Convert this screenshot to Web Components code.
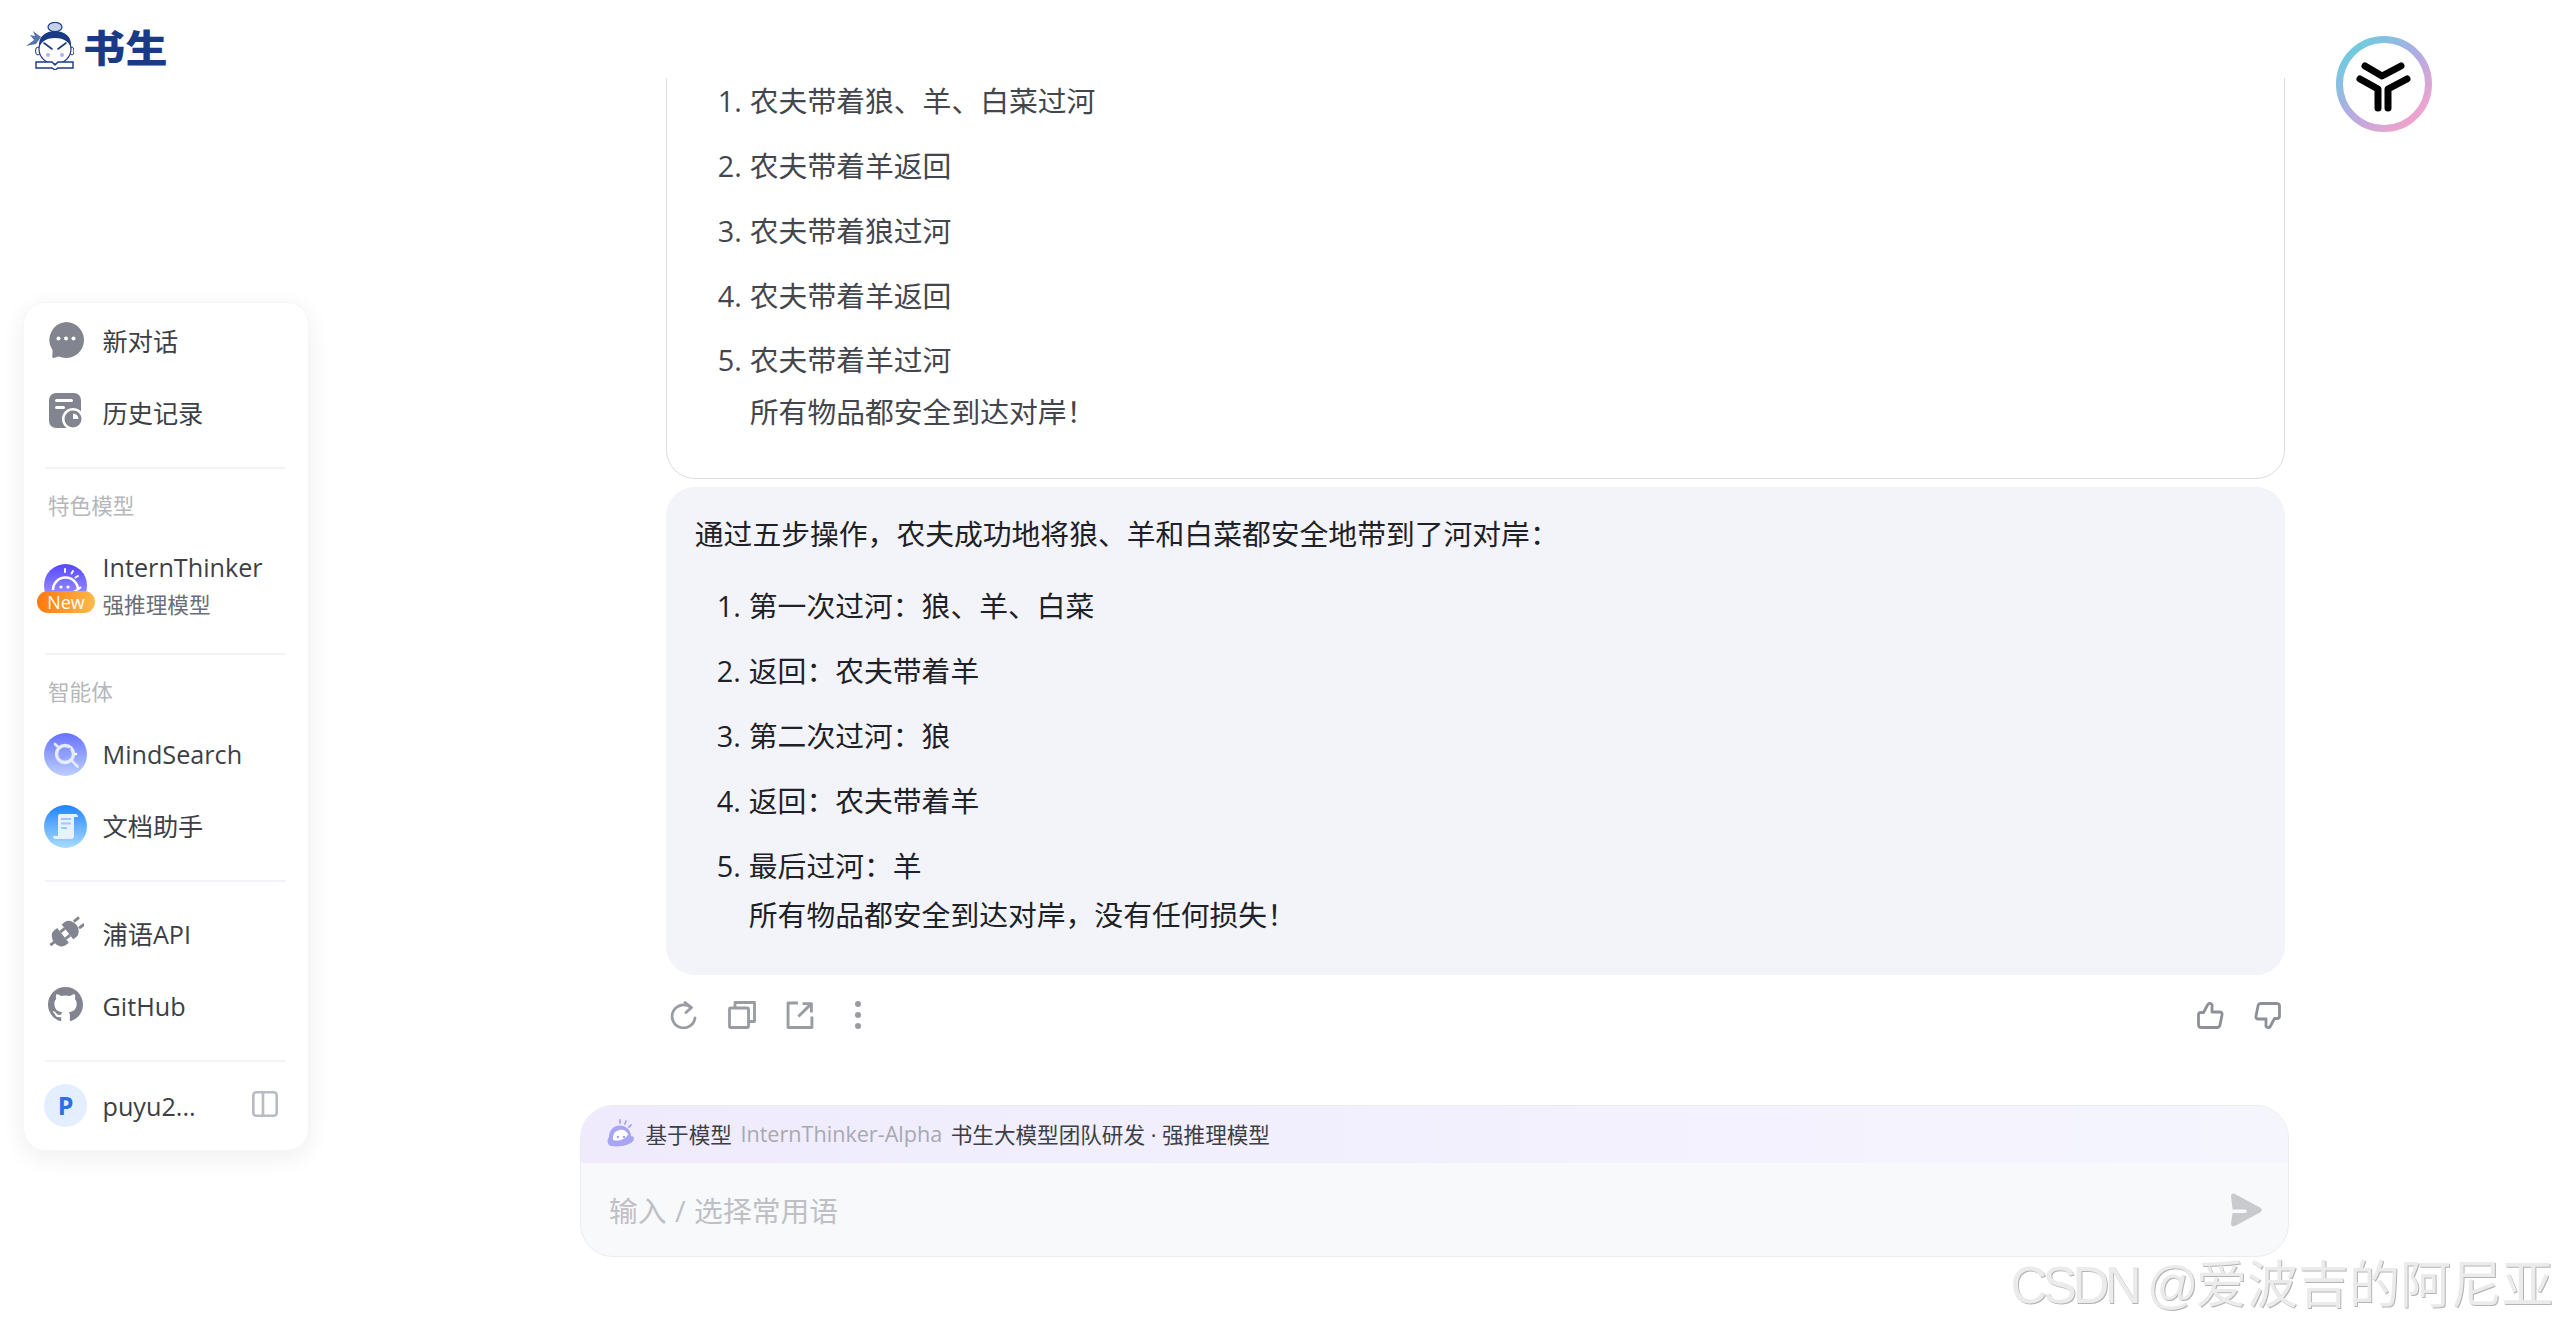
<!DOCTYPE html>
<html lang="zh-CN"><head><meta charset="utf-8"><title>书生</title>
<style>
html,body{margin:0;height:100%;overflow:hidden;background:#fff}
body{font-family:"Open Sans","Noto Sans CJK SC",sans-serif;color:#3c3f46}
svg{display:block}
</style></head>
<body>
<app-shell>
  <brand-logo slot="left"></brand-logo>
  <side-nav slot="left">
    <nav-item label="新对话">
      <svg slot="icon" width="36" height="36" viewBox="0 0 36 36" style="margin-top:-4px"><path fill="#82858f" d="M18 0a18 18 0 1 1-7.2 34.5l-5.3 1.4a1.2 1.2 0 0 1-1.2-1.2l.3-6.5A18 18 0 0 1 18 0z"/><circle cx="10.500" cy="16.500" r="2" fill="#fff"/><circle cx="18" cy="16.500" r="2" fill="#fff"/><circle cx="25.500" cy="16.500" r="2" fill="#fff"/></svg>
    </nav-item>
    <nav-item label="历史记录">
      <svg slot="icon" width="36" height="37" viewBox="0 0 36 37" style="margin-top:-4px"><rect x="1" y="0" width="32" height="35" rx="7" fill="#82858f"/><rect x="7" y="6" width="18" height="3" rx="1.500" fill="#fff"/><rect x="7" y="13" width="10" height="3" rx="1.500" fill="#fff"/><circle cx="25" cy="26" r="11" fill="#fff"/><circle cx="25" cy="26" r="8.500" fill="#82858f"/><path d="M25 20.500V26h5.500A5.500 5.500 0 0 0 25 20.500z" fill="#fff"/></svg>
    </nav-item>
    <nav-divider></nav-divider>
    <nav-label>特色模型</nav-label>
    <nav-item label="InternThinker" sub="强推理模型" tall>
      <svg slot="icon" width="43" height="43" viewBox="0 0 43 43"><defs><linearGradient id="g1" x1="0" y1="0" x2="0" y2="1"><stop offset="0" stop-color="#5647ff"/><stop offset="1" stop-color="#ada9ff"/></linearGradient></defs><circle cx="21.500" cy="21.500" r="21.500" fill="url(#g1)"/><path d="M9 26a12.500 12.500 0 0 1 25 0" fill="none" stroke="#fff" stroke-width="2.600"/><path d="M6 31c8 2 22 0 31-8" fill="none" stroke="#fff" stroke-width="2"/><circle cx="17" cy="23" r="1.600" fill="#fff"/><circle cx="24" cy="23" r="1.600" fill="#fff"/><path d="M21 5v3M29 7l-1.500 2.500M34 12l-2.500 1.500" stroke="#fff" stroke-width="2" stroke-linecap="round"/></svg>
      <new-badge slot="badge">New</new-badge>
    </nav-item>
    <nav-divider></nav-divider>
    <nav-label>智能体</nav-label>
    <nav-item label="MindSearch">
      <svg slot="icon" width="43" height="43" viewBox="0 0 43 43"><defs><linearGradient id="g2" x1="0" y1="0" x2="0" y2="1"><stop offset="0" stop-color="#6671ff"/><stop offset="1" stop-color="#bcd0ff"/></linearGradient></defs><circle cx="21.500" cy="21.500" r="21.500" fill="url(#g2)"/><circle cx="21" cy="21" r="8.500" fill="none" stroke="#e6ecff" stroke-width="3.400"/><path d="M27.500 27.500l6 6M11 11l3 3" stroke="#e6ecff" stroke-width="2.600" stroke-linecap="round"/><path d="M26 15l-4 7-5 3" fill="none" stroke="#8f9bff" stroke-width="2"/><circle cx="32" cy="21" r="1.300" fill="#fff"/></svg>
    </nav-item>
    <nav-item label="文档助手">
      <svg slot="icon" width="43" height="43" viewBox="0 0 43 43"><defs><linearGradient id="g3" x1="0" y1="0" x2="0" y2="1"><stop offset="0" stop-color="#1f84ff"/><stop offset="1" stop-color="#a8dcff"/></linearGradient></defs><circle cx="21.500" cy="21.500" r="21.500" fill="url(#g3)"/><path d="M14 11q0-2 2-2h16q2 .5 2 3h-4v19q0 3-3 3H11q-2-.5-2-3h5z" fill="#e8f2ff"/><path d="M17 14h10M17 18.500h10M17 23h6" stroke="#9cc8ff" stroke-width="2"/></svg>
    </nav-item>
    <nav-divider></nav-divider>
    <nav-item label="浦语API" gap>
      <svg slot="icon" width="36" height="34" viewBox="0 0 36 36" style="margin-top:-4px"><g transform="rotate(-38 18 18)" fill="#82858f"><rect x="-3" y="16.500" width="9" height="3"/><path d="M14 8H10a8 10 0 0 0 0 20h4z"/><rect x="14" y="12" width="6" height="3"/><rect x="14" y="21" width="6" height="3"/><path d="M20 8h4a8 10 0 0 1 0 20h-4z"/><rect x="32" y="12" width="7" height="3"/><rect x="32" y="21" width="7" height="3"/></g></svg>
    </nav-item>
    <nav-item label="GitHub">
      <svg slot="icon" width="35" height="35" viewBox="0 0 16 16" style="margin-top:-4px"><path fill="#82858f" d="M8 0C3.58 0 0 3.58 0 8c0 3.54 2.29 6.53 5.47 7.59.4.07.55-.17.55-.38 0-.19-.01-.82-.01-1.49-2.01.37-2.53-.49-2.69-.94-.09-.23-.48-.94-.82-1.130-.28-.15-.68-.52-.01-.53.63-.01 1.080.58 1.230.82.72 1.210 1.870.87 2.330.66.07-.52.28-.87.51-1.070-1.780-.2-3.640-.89-3.640-3.950 0-.87.31-1.590.82-2.150-.08-.2-.36-1.020.08-2.120 0 0 .67-.21 2.200.82.64-.18 1.320-.27 2-.27.68 0 1.360.09 2 .27 1.530-1.040 2.200-.82 2.200-.82.44 1.100.16 1.920.08 2.120.51.56.82 1.270.82 2.150 0 3.070-1.870 3.750-3.650 3.950.29.25.54.73.54 1.480 0 1.070-.01 1.930-.01 2.200 0 .21.15.46.55.38A8.013 8.013 0 0 0 16 8c0-4.420-3.580-8-8-8z"/></svg>
    </nav-item>
    <nav-divider></nav-divider>
    <nav-item label="puyu2..." foot>
      <user-avatar slot="icon">P</user-avatar>
      <svg slot="end" width="26" height="26" viewBox="0 0 26 26" style="margin-top:-6px"><rect x="1.300" y="1.300" width="23.400" height="23.400" rx="3" fill="none" stroke="#b9bbc3" stroke-width="2.600"/><path d="M11 2v22" stroke="#b9bbc3" stroke-width="2.600"/></svg>
    </nav-item>
  </side-nav>

  <chat-pane slot="center">
    <chat-bubble variant="answer">
      <step-item num="1">农夫带着狼、羊、白菜过河</step-item>
      <step-item num="2">农夫带着羊返回</step-item>
      <step-item num="3">农夫带着狼过河</step-item>
      <step-item num="4">农夫带着羊返回</step-item>
      <step-item num="5">农夫带着羊过河<span slot="note">所有物品都安全到达对岸！</span></step-item>
    </chat-bubble>
    <chat-bubble variant="summary">
      <bubble-lead>通过五步操作，农夫成功地将狼、羊和白菜都安全地带到了河对岸：</bubble-lead>
      <step-item num="1">第一次过河：狼、羊、白菜</step-item>
      <step-item num="2">返回：农夫带着羊</step-item>
      <step-item num="3">第二次过河：狼</step-item>
      <step-item num="4">返回：农夫带着羊</step-item>
      <step-item num="5" tight>最后过河：羊<span slot="note">所有物品都安全到达对岸，没有任何损失！</span></step-item>
    </chat-bubble>
    <action-bar>
      <svg slot="left" width="28" height="28" viewBox="0 0 26 28" fill="none" stroke="#9a9ca3" stroke-width="2.800" stroke-linecap="round" stroke-linejoin="round"><path d="M20 6.500A11.500 11.500 0 1 0 24 17"/><path d="M14 1.500l6.500 5-5.500 5"/></svg>
      <svg slot="left" width="28" height="28" viewBox="0 0 28 28" fill="none" stroke="#9a9ca3" stroke-width="2.800" stroke-linejoin="round"><rect x="1.500" y="7" width="19" height="19.500" rx="1"/><path d="M7 7V1.500h19.500V20.500H20.500"/></svg>
      <svg slot="left" width="28" height="28" viewBox="0 0 26 27" fill="none" stroke="#9a9ca3" stroke-width="2.800" stroke-linejoin="round"><path d="M11 2H1.500v23.500h23V15"/><path d="M11.500 15L23 3.500M15.500 2.500h8.500V11"/></svg>
      <svg slot="left" width="28" height="30" viewBox="0 0 12 30" fill="#9a9ca3"><circle cx="6" cy="4" r="3"/><circle cx="6" cy="15" r="3"/><circle cx="6" cy="26" r="3"/></svg>
      <svg slot="right" width="28" height="27" viewBox="0 0 27 27" fill="none" stroke="#8e9098" stroke-width="2.800" stroke-linejoin="round"><path d="M2 13q0-2.500 2.500-2.500H7L11 3q1-2 3-1.500T15.500 4v6h7.500q3 0 2.500 3l-2 10q-.5 2.500-3 2.500H5Q2 25.500 2 23z"/></svg>
      <svg slot="right" width="28" height="27" viewBox="0 0 27 27" fill="none" stroke="#8e9098" stroke-width="2.800" stroke-linejoin="round" style="transform:rotate(180deg)"><path d="M2 13q0-2.500 2.500-2.500H7L11 3q1-2 3-1.500T15.500 4v6h7.500q3 0 2.500 3l-2 10q-.5 2.500-3 2.500H5Q2 25.500 2 23z"/></svg>
    </action-bar>
  </chat-pane>
  <chat-input slot="center"></chat-input>

  <corner-mark slot="right"></corner-mark>
  <water-mark slot="overlay"></water-mark>
  <csdn-mark slot="overlay"><span class="x">CSDN @</span>爱波吉的阿尼亚</csdn-mark>
</app-shell>

<script>
function def(name, css, html, init){
  customElements.define(name, class extends HTMLElement{
    constructor(){
      super();
      const r=this.attachShadow({mode:'open'});
      r.innerHTML='<style>'+css+'</style>'+(typeof html==='function'?html(this):html);
    }
    connectedCallback(){ if(init) init(this); }
  });
}

def('app-shell',`
  :host{display:grid;grid-template-columns:580px 1709px 1fr;height:100vh;overflow:hidden;position:relative}
  .c{display:flex;flex-direction:column;min-width:0;position:relative;z-index:0}
  .l{display:flex;flex-direction:column;padding-left:23px;position:relative;z-index:2}
  .r{padding:36px 0 0 47px}
`,`<div class="l"><slot name="left"></slot></div><div class="c"><slot name="center"></slot></div><div class="r"><slot name="right"></slot></div><slot name="overlay"></slot>`);

def('brand-logo',`
  :host{display:flex;align-items:center;gap:9px;height:48px;padding:22px 0 0 3px;margin-bottom:232px}
  .t{font:900 42px/48px "Noto Sans CJK SC",sans-serif;color:#1a3a86;letter-spacing:.5px;transform:scaleY(.9)}
`,`<svg width="48" height="48" viewBox="0 0 48 48">
  <ellipse cx="29" cy="5" rx="7" ry="4.600" fill="#c5d1ea" stroke="#1a3a86" stroke-width="1.200"/>
  <path d="M15 15L7 9l2 5-5-1 4 5-8 6 10-2z" fill="#5673ad"/>
  <ellipse cx="12" cy="29" rx="2.500" ry="4" fill="#fff" stroke="#1a3a86"/><ellipse cx="46" cy="29" rx="2" ry="4" fill="#fff" stroke="#1a3a86"/>
  <ellipse cx="29" cy="27" rx="16" ry="15" fill="#fff" stroke="#1a3a86" stroke-width="1.200"/>
  <path d="M13 25C12 14 20 9 29 9s17 5 16 16c-3-6-8-9-16-9s-13 3-16 9z" fill="#1a3a86"/>
  <path d="M18 21l8 6M40 21l-8 6" stroke="#1a3a86" stroke-width="1.600" stroke-linecap="round"/>
  <circle cx="22" cy="33" r="2" fill="#a9b7dc"/><circle cx="36" cy="33" r="2" fill="#a9b7dc"/>
  <path d="M10 40h16l3 3 3-3h15v6H32l-3 2-3-2H10z" fill="#fff" stroke="#1a3a86" stroke-width="1.400"/>
</svg><span class="t">书生</span>`);

def('side-nav',`
  :host{display:block;width:286px;height:849px;box-sizing:border-box;padding:2.500px 22px 0 20px;background:#fff;border-radius:22px;border:1px solid #f6f6f8;box-shadow:0 6px 24px rgba(30,35,60,.07)}
`,`<slot></slot>`);

def('nav-item',`
  :host{display:flex;align-items:center;gap:15.500px;height:72px;font-size:25.200px;color:#3c3f46}
  :host([gap]){margin-top:17px}
  :host([foot]){margin-top:9px}
  :host([tall]){margin:25px 0 31px}
  .i{position:relative;flex:none;width:43px;display:flex;justify-content:center;align-items:center}
  .b{position:absolute;left:-7px;top:27px}
  .s{font-size:21.600px;color:#6b6e76;line-height:37px}
  .m{line-height:37px;white-space:nowrap}
  .e{margin-left:auto;padding-right:8px}
`,h=>`<div class="i"><slot name="icon"></slot><div class="b"><slot name="badge"></slot></div></div>
  <div><div class="m">${h.getAttribute('label')}</div>${h.hasAttribute('sub')?`<div class="s">${h.getAttribute('sub')}</div>`:''}</div>
  <div class="e"><slot name="end"></slot></div>`);

def('nav-divider',`:host{display:block;height:2px;background:#f3f3f7;margin:17px 0 0 1px}`,``);
def('nav-label',`:host{display:block;height:38px;line-height:38px;margin:18px 0 8px 4px;font-size:21.600px;color:#b6b7bb}`,`<slot></slot>`);
def('new-badge',`:host{display:block;width:58px;height:22px;border-radius:11px;background:linear-gradient(100deg,#ff760c,#ffbb4f);color:#fff;font-size:18px;line-height:22px;text-align:center;font-family:"Open Sans",sans-serif}`,`<slot></slot>`);
def('user-avatar',`:host{display:flex;align-items:center;justify-content:center;width:43px;height:43px;border-radius:50%;background:#e3efff;color:#2f6fe4;font-weight:700;font-size:25px;margin-top:-3px}`,`<slot></slot>`);

def('chat-pane',`
  :host{display:flex;flex-direction:column;justify-content:flex-end;height:966px;margin-top:78px;padding:0 4px 0 86px;overflow:hidden;flex:none;box-sizing:border-box;gap:0}
`,`<slot></slot>`);

def('chat-bubble',`
  :host{display:block;flex:none;box-sizing:border-box;border-radius:29px;padding:21.600px 28.800px;font-size:28.800px;line-height:51.840px}
  :host([variant=answer]){color:#43464d;border:1.500px solid #dcdde2;padding:40px 28.800px 27px;margin-bottom:8px}
  :host([variant=summary]){color:#1e2127;background:#f3f4f9;padding-top:21px;padding-bottom:21.500px}
`,`<slot></slot>`);

def('bubble-lead',`:host{display:block;margin-bottom:20.500px}`,`<slot></slot>`);
def('step-item',`
  :host{display:flex;margin-bottom:13px}
  .n{flex:none;width:54px;box-sizing:border-box;padding-right:8px;text-align:right}
  .note{display:block}
  :host([tight]) .note{margin-top:-3px}
`,h=>`<div class="n">${h.getAttribute('num')}.</div><div><div><slot></slot></div><slot name="note" class="note"></slot></div>`);

def('action-bar',`
  :host{display:flex;justify-content:space-between;flex:none;height:58px;padding-top:11px;margin:0 -12px 0 -11px}
  .g{display:flex;align-items:center;height:58px}
  ::slotted(svg){margin:0 15px}
`,`<div class="g"><slot name="left"></slot></div><div class="g"><slot name="right"></slot></div>`);

def('chat-input',`
  :host{display:block;flex:none;height:152px;margin-top:61px;box-sizing:border-box;border:1.500px solid #ebecf0;border-radius:33px;overflow:hidden;background:#f8f9fb;position:relative;z-index:3}
  .h{display:flex;align-items:center;gap:8.500px;height:57px;padding:0 0 2px 24px;box-sizing:border-box;background:linear-gradient(90deg,#efebfd,#f5f5fe);font-size:21.600px;color:#3c3f46;white-space:nowrap}
  .h svg{margin-right:1px}
  .a{color:#a8a9ae}
  .b{display:flex;align-items:center;justify-content:space-between;height:93px;padding:0 26px 0 28px;font-size:28.800px;color:#bfc0c5;word-spacing:1px}
`,`<div class="h"><svg width="31" height="30" viewBox="0 0 31 30"><path d="M4 18a11 11 0 0 1 22-1c2 0 3 1 3 3s-4 6-12 7c-5 .5-10 1-13-1-2-2-2-6 0-8z" fill="#a8a6f2"/><path d="M8 18a8 8 0 0 1 15-3c-1 4-8 8-15 6z" fill="#fff"/><circle cx="13" cy="18" r="1.300" fill="#a8a6f2"/><circle cx="19" cy="18" r="1.300" fill="#a8a6f2"/><path d="M15 1v3M21 2l-1 3M26 6l-2 2" stroke="#a8a6f2" stroke-width="1.800" stroke-linecap="round"/></svg><span>基于模型</span><span class="a">InternThinker-Alpha</span><span>书生大模型团队研发 · 强推理模型</span></div>
<div class="b"><span>输入 / 选择常用语</span><svg width="34" height="34" viewBox="0 0 34 34"><path d="M3 3.500C3 1 5 0 7 1l25 13.500c2.400 1.300 2.400 3.700 0 5L7 33c-2 1-4 0-4-2.500l1.600-10.500H17a1.800 1.800 0 0 0 0-3.600H4.600z" fill="#c9cace"/></svg></div>`);

def('corner-mark',`:host{display:block;width:96px;height:96px}`,`<svg width="96" height="96" viewBox="0 0 96 96"><defs><linearGradient id="r" x1=".15" y1=".1" x2=".85" y2=".9"><stop offset="0" stop-color="#6fcbdf"/><stop offset=".5" stop-color="#b3abe3"/><stop offset="1" stop-color="#f0a3cc"/></linearGradient></defs><circle cx="48" cy="48" r="44.500" fill="#fff" stroke="url(#r)" stroke-width="7"/><g fill="none" stroke="#000" stroke-width="7" stroke-linecap="round" stroke-linejoin="round"><path d="M29 30l17 10 19-10"/><path d="M24 43l18 10v19"/><path d="M71 43L52 53v19"/></g></svg>`);

def('water-mark',`
  :host{position:absolute;inset:0;pointer-events:none;z-index:1;overflow:hidden;display:block}
  span{position:absolute;width:420px;margin:-20px 0 0 -210px;height:40px;line-height:40px;text-align:center;font-size:24px;white-space:nowrap;color:rgba(0,0,0,.025);transform:rotate(-31deg)}
`,`<div id="w"></div>`,el=>{
  const w=el.shadowRoot.getElementById('w');
  if(w.children.length) return;
  [[1344,-76],[748,158],[1940,158],[1344,392],[748,626],[1940,626],[1344,860],[748,1094],[1940,1094]].forEach(p=>{
    const s=document.createElement('span');
    s.textContent='187****1772 内容为AI生成仅供参考';
    s.style.left=p[0]+'px';s.style.top=p[1]+'px';
    w.appendChild(s);
  });
});

def('csdn-mark',`
  :host{position:absolute;right:6px;top:1252px;z-index:4;font:51px/68px "Liberation Sans","Noto Sans CJK SC",sans-serif;color:#ebebeb;text-shadow:1px 1px 0 #b4b4b4;white-space:nowrap}
  ::slotted(.x){letter-spacing:-4.500px;margin-right:2px}
`,`<slot></slot>`);
</script>
</body></html>
